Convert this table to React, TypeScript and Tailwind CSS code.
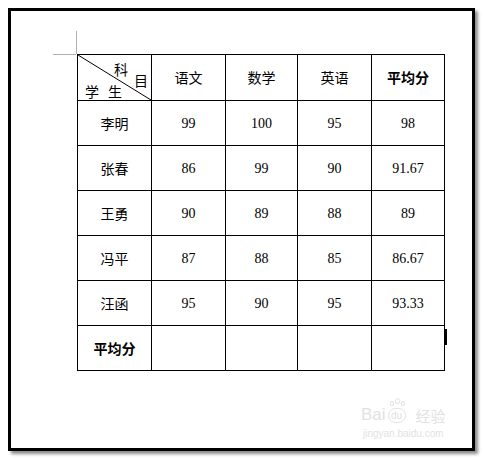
import React from "react";

const cjk = { fontFamily: '"SimSun", "Noto Sans CJK SC", sans-serif' };
const num = { fontFamily: '"Liberation Serif", "Noto Sans CJK SC", serif' };
const sans = { fontFamily: '"Liberation Sans", Arial, sans-serif' };

const rows = [
  { name: "李明", scores: ["99", "100", "95", "98"] },
  { name: "张春", scores: ["86", "99", "90", "91.67"] },
  { name: "王勇", scores: ["90", "89", "88", "89"] },
  { name: "冯平", scores: ["87", "88", "85", "86.67"] },
  { name: "汪函", scores: ["95", "90", "95", "93.33"] },
];

const subjects = ["语文", "数学", "英语"];

function DiagonalHeader() {
  return (
    <td className="relative border border-black p-0 align-top" style={cjk}>
      <svg className="absolute inset-0 w-full h-full" preserveAspectRatio="none" viewBox="0 0 100 100">
        <line x1="0" y1="0" x2="100" y2="100" stroke="black" strokeWidth="1" vectorEffect="non-scaling-stroke" />
      </svg>
      <div className="relative flex flex-col pt-[7px] text-[14px] leading-none">
        <div className="flex items-start justify-end h-[22px] pr-[3px] gap-[6px]">
          <span>科</span>
          <span className="mt-[11px]">目</span>
        </div>
        <div className="flex pl-[7px] gap-[9px]">
          <span>学</span>
          <span>生</span>
        </div>
      </div>
    </td>
  );
}

export default function App() {
  return (
    <div className="w-[483px] h-[460px] bg-white p-[8px]">
      <div className="relative w-[467px] h-[443px] border-[3px] border-black bg-white shadow-[3px_3px_3px_rgba(0,0,0,0.45)] pt-[43px] pl-[66px]">
        {/* crop mark */}
        <div className="absolute left-[65px] top-[20px] w-px h-[23px] bg-[#b0b0b0]" />
        <div className="absolute left-[42px] top-[43px] w-[23px] h-px bg-[#b0b0b0]" />

        <table className="border-collapse text-[14px] text-black" style={{ tableLayout: "fixed" }}>
          <colgroup>
            <col className="w-[74px]" />
            <col className="w-[74px]" />
            <col className="w-[72px]" />
            <col className="w-[74px]" />
            <col className="w-[73px]" />
          </colgroup>
          <tbody>
            <tr className="h-[46px]">
              <DiagonalHeader />
              {subjects.map((s) => (
                <td key={s} className="border border-black text-center p-0" style={cjk}>
                  {s}
                </td>
              ))}
              <td className="border border-black text-center font-bold p-0" style={cjk}>
                平均分
              </td>
            </tr>
            {rows.map((r) => (
              <tr key={r.name} className="h-[45px]">
                <td className="border border-black text-center p-0" style={cjk}>
                  {r.name}
                </td>
                {r.scores.map((v, i) => (
                  <td key={i} className="border border-black text-center p-0" style={num}>
                    {v}
                  </td>
                ))}
              </tr>
            ))}
            <tr className="h-[45px]">
              <td className="border border-black text-center font-bold p-0" style={cjk}>
                平均分
              </td>
              <td className="border border-black p-0" />
              <td className="border border-black p-0" />
              <td className="border border-black p-0" />
              <td className="border border-black p-0" />
            </tr>
          </tbody>
        </table>

        {/* cursor mark at table edge */}
        <div className="absolute left-[433px] top-[318px] w-[3px] h-[16px] bg-black" />

        {/* watermark */}
        <div className="absolute left-[350px] top-[395px] flex flex-col items-center text-[#e2e2e2]">
          <div className="flex items-end gap-[2px] leading-none">
            <span className="text-[17px]" style={sans}>Bai</span>
            <span className="relative flex items-center justify-center w-[18px] h-[15px] rounded-full border border-[#e2e2e2] text-[10px]" style={sans}>
              du
              <span className="absolute -top-[8px] left-[1px] w-[4px] h-[5px] rounded-full border border-[#e2e2e2]" />
              <span className="absolute -top-[11px] left-[6px] w-[5px] h-[6px] rounded-full border border-[#e2e2e2]" />
              <span className="absolute -top-[8px] left-[12px] w-[4px] h-[5px] rounded-full border border-[#e2e2e2]" />
            </span>
            <span className="text-[15px] ml-[8px]" style={cjk}>经验</span>
          </div>
          <span className="text-[10px] mt-[6px] leading-none" style={sans}>
            jingyan.baidu.com
          </span>
        </div>
      </div>
    </div>
  );
}
